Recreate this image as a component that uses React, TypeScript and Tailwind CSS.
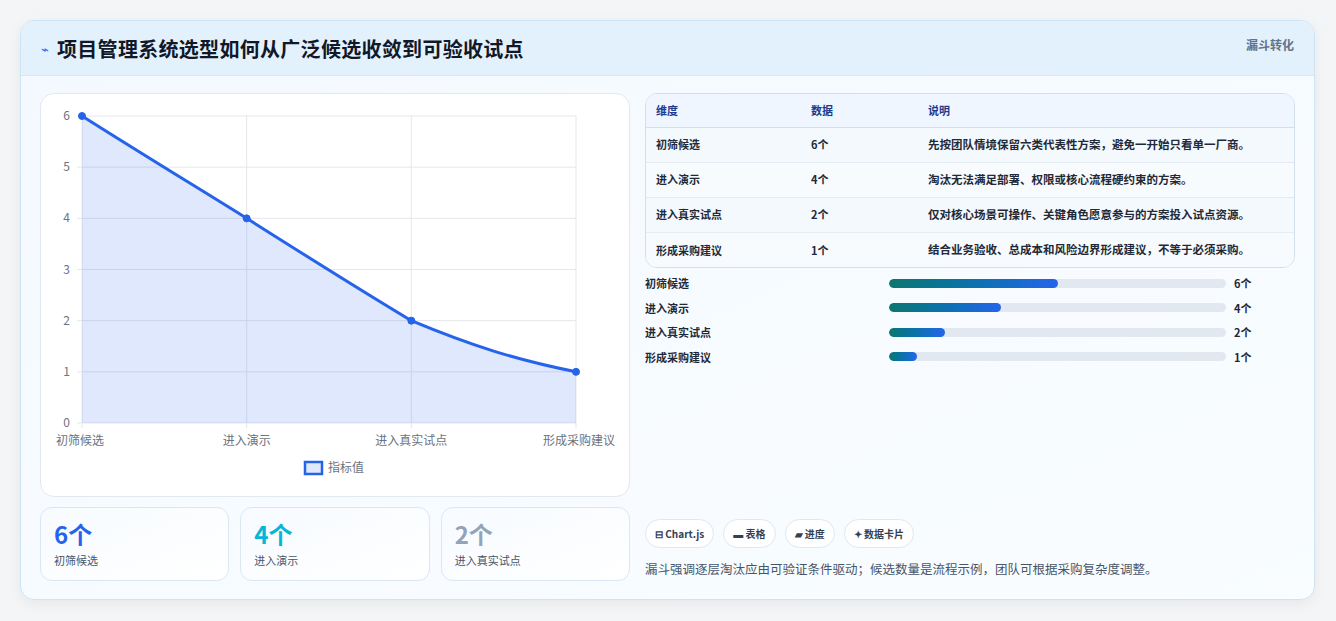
import React from "react";

const rows = [
  ["初筛候选", "6个", "先按团队情境保留六类代表性方案，避免一开始只看单一厂商。", 6],
  ["进入演示", "4个", "淘汰无法满足部署、权限或核心流程硬约束的方案。", 4],
  ["进入真实试点", "2个", "仅对核心场景可操作、关键角色愿意参与的方案投入试点资源。", 2],
  ["形成采购建议", "1个", "结合业务验收、总成本和风险边界形成建议，不等于必须采购。", 1],
] as const;

function Chart() {
  const x0 = 41, x1 = 535, y0 = 22, y1 = 329;
  const xs = [0, 1, 2, 3].map((i) => x0 + ((x1 - x0) * i) / 3);
  const ys = [6, 4, 2, 1].map((v) => y1 - ((y1 - y0) * v) / 6);
  const line = `M${xs[0]},${ys[0]} C${xs[0] + 60},${ys[0] + 38} ${xs[1] - 40},${ys[1] - 25} ${xs[1]},${ys[1]} C${xs[1] + 60},${ys[1] + 38} ${xs[2] - 50},${ys[2] - 30} ${xs[2]},${ys[2]} C${xs[2] + 60},${ys[2] + 25} ${xs[3] - 60},${ys[3] - 12} ${xs[3]},${ys[3]}`;
  const labels = ["初筛候选", "进入演示", "进入真实试点", "形成采购建议"];
  return (
    <svg width="589" height="403" className="block" style={{ fontFamily: "'Noto Sans CJK SC', sans-serif" }}>
      {[0, 1, 2, 3, 4, 5, 6].map((v) => {
        const y = y1 - ((y1 - y0) * v) / 6;
        return (
          <g key={v}>
            <line x1={x0 - 5} x2={x1} y1={y} y2={y} stroke="#e5e7eb" />
            <text x={x0 - 12} y={y + 4} fontSize="12" fill="#6b7280" textAnchor="end">{v}</text>
          </g>
        );
      })}
      {xs.map((x, i) => (
        <g key={i}>
          <line x1={x} x2={x} y1={y0} y2={y1 + 5} stroke="#e5e7eb" />
          <text x={i === 0 ? x - 26 : i === 3 ? x + 39 : x} y={y1 + 22} fontSize="12" fill="#6b7280" textAnchor={i === 0 ? "start" : i === 3 ? "end" : "middle"}>{labels[i]}</text>
        </g>
      ))}
      <path d={`${line} L${x1},${y1} L${x0},${y1} Z`} fill="rgba(37,99,235,0.15)" />
      <path d={line} fill="none" stroke="#2563eb" strokeWidth="3" />
      {xs.map((x, i) => (
        <circle key={i} cx={x} cy={ys[i]} r="3.5" fill="#2563eb" stroke="#2563eb" />
      ))}
      <rect x="264" y="368" width="17" height="12" fill="rgba(37,99,235,0.15)" stroke="#2563eb" strokeWidth="2.5" />
      <text x="287" y="378" fontSize="12" fill="#6b7280">指标值</text>
    </svg>
  );
}

export default function App() {
  return (
    <div className="w-[1336px] h-[621px] bg-[#f4f5f7] p-[20px] pr-[21px]" style={{ fontFamily: "'Noto Sans CJK SC', 'Noto Sans', sans-serif" }}>
      <div className="h-[580px] rounded-[14px] border border-[#cfe3f3] bg-gradient-to-br from-[#f4f9ff] to-[#f9fdff] shadow-[0_4px_14px_rgba(0,0,0,0.06)] overflow-hidden flex flex-col">
        <div className="h-[55px] shrink-0 bg-[#e3f1fd] border-b border-[#d2e7f7] flex items-start justify-between px-[20px]">
          <div className="flex items-center gap-[8px] h-[55px]">
            <span className="text-[#2563eb] text-[13px]">⌁</span>
            <span className="text-[20px] font-bold text-[#111827] tracking-[0.3px]">项目管理系统选型如何从广泛候选收敛到可验收试点</span>
          </div>
          <span className="mt-[15px] text-[12px] font-bold text-[#64748b]">漏斗转化</span>
        </div>
        <div className="flex-1 flex gap-[15px] px-[19px] pt-[17px] pb-[18px]">
          <div className="w-[590px] flex flex-col gap-[10px]">
            <div className="h-[404px] rounded-[14px] border border-[#e2e8f0] bg-white"><Chart /></div>
            <div className="flex gap-[11px] flex-1">
              {[
                ["6个", "text-[#2563eb]", "初筛候选"],
                ["4个", "text-[#06b6d4]", "进入演示"],
                ["2个", "text-[#94a3b8]", "进入真实试点"],
              ].map(([v, c, l]) => (
                <div key={l} className="flex-1 rounded-[12px] border border-[#dbe7f3] bg-gradient-to-br from-[#f7fbff] to-white px-[13px] pt-[10px]">
                  <div className={`text-[24px] font-bold leading-[32px] ${c}`}>{v}</div>
                  <div className="text-[11px] text-[#475569] mt-[2px]">{l}</div>
                </div>
              ))}
            </div>
          </div>
          <div className="flex-1 flex flex-col">
            <div className="rounded-[12px] border border-[#d4dfec] overflow-hidden bg-white/60">
              <table className="w-full text-[11px] text-[#1f2937]">
                <thead>
                  <tr className="bg-[#eff6ff] h-[33px] text-[#1e3a8a] font-bold border-b border-[#d4dfec]">
                    <th className="text-left font-bold pl-[10px] w-[165px]">维度</th>
                    <th className="text-left font-bold w-[117px]">数据</th>
                    <th className="text-left font-bold">说明</th>
                  </tr>
                </thead>
                <tbody>
                  {rows.map((r, i) => (
                    <tr key={i} className={`h-[35px] ${i < 3 ? "border-b border-[#e5ebf2]" : ""} ${i % 2 === 0 ? "bg-[#f3f9fd]" : "bg-[#f8fbfd]"}`}>
                      <td className="pl-[10px] font-semibold">{r[0]}</td>
                      <td className="font-semibold">{r[1]}</td>
                      <td className="font-semibold text-[11.5px]">{r[2]}</td>
                    </tr>
                  ))}
                </tbody>
              </table>
            </div>
            <div className="mt-[6px] flex flex-col gap-[6px]">
              {rows.map((r) => (
                <div key={r[0]} className="flex items-center h-[18.5px] text-[11px] font-semibold text-[#1f2937]">
                  <span className="w-[244px]">{r[0]}</span>
                  <div className="w-[337px] h-[9px] rounded-full bg-[#e2e8f0] overflow-hidden">
                    <div className="h-full rounded-full bg-gradient-to-r from-[#0f766e] to-[#2563eb]" style={{ width: `${(r[3] / 6) * 50}%` }} />
                  </div>
                  <span className="ml-[8px] font-bold">{r[1]}</span>
                </div>
              ))}
            </div>
            <div className="mt-auto flex gap-[9px]">
              {["⊟ Chart.js", "▬ 表格", "▰ 进度", "✦ 数据卡片"].map((t) => (
                <span key={t} className="h-[29px] px-[9px] rounded-full border border-[#dfe7ef] bg-white text-[10px] font-bold text-[#334155] flex items-center">{t}</span>
              ))}
            </div>
            <div className="mt-[12px] mb-[2px] text-[12.5px] text-[#475569]">漏斗强调逐层淘汰应由可验证条件驱动；候选数量是流程示例，团队可根据采购复杂度调整。</div>
          </div>
        </div>
      </div>
    </div>
  );
}
